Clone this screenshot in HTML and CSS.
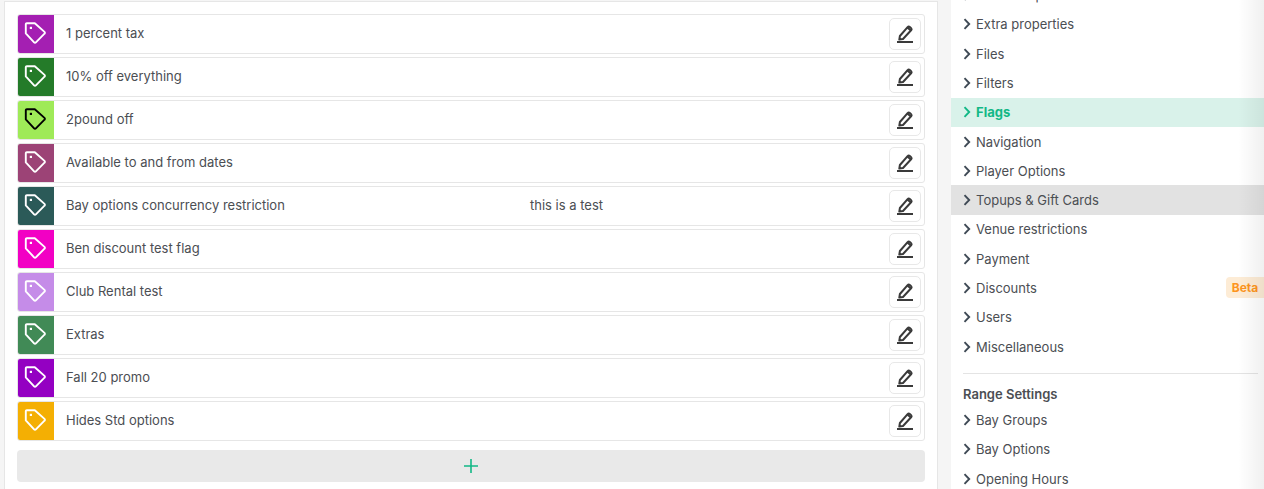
FILE: index.html
```html
<!DOCTYPE html>
<html lang="en">
<head>
<meta charset="utf-8">
<title>Flags</title>
<link rel="stylesheet" href="styles.css">
</head>
<body>
<svg class="sprites" width="0" height="0" aria-hidden="true">
  <symbol id="tag" viewBox="0 0 24 24">
    <path d="M1.8 3.2a1 1 0 0 1 1-1h8l9.7 8.7a1.2 1.2 0 0 1 0 1.8l-8.6 8.6a1.2 1.2 0 0 1-1.8 0L1.8 12.4z" fill="none" stroke="currentColor" stroke-width="1.9" stroke-linejoin="round"/>
    <rect x="5.8" y="5.8" width="2.2" height="2.2" fill="currentColor"/>
  </symbol>
  <symbol id="pen" viewBox="0 0 16 18">
    <path d="M2.3 14.6l.6-3.6 7.7-8.8a1.6 1.6 0 0 1 2.2-.1l1.2 1a1.6 1.6 0 0 1 .1 2.2L6 14z" fill="none" stroke="currentColor" stroke-width="2" stroke-linejoin="round"/>
    <path d="M9.6 3.2l4 3.4 1.2-1.6-3.6-3.2z" fill="currentColor"/>
    <path d="M0 17h17" stroke="currentColor" stroke-width="2" fill="none"/>
  </symbol>
  <symbol id="chev" viewBox="0 0 8 12">
    <path d="M1.5 1.2 6.2 6l-4.7 4.8" fill="none" stroke="currentColor" stroke-width="1.9"/>
  </symbol>
</svg>

<main class="panel">
  <ul class="flags">
    <li class="flag"><span class="swatch c1"><svg class="tag"><use href="#tag"/></svg></span><span class="name">1 percent tax</span><span class="note"></span><button class="edit"><svg class="pen"><use href="#pen"/></svg></button></li>
    <li class="flag"><span class="swatch c2"><svg class="tag"><use href="#tag"/></svg></span><span class="name">10% off everything</span><span class="note"></span><button class="edit"><svg class="pen"><use href="#pen"/></svg></button></li>
    <li class="flag"><span class="swatch c3"><svg class="tag"><use href="#tag"/></svg></span><span class="name">2pound off</span><span class="note"></span><button class="edit"><svg class="pen"><use href="#pen"/></svg></button></li>
    <li class="flag"><span class="swatch c4"><svg class="tag"><use href="#tag"/></svg></span><span class="name">Available to and from dates</span><span class="note"></span><button class="edit"><svg class="pen"><use href="#pen"/></svg></button></li>
    <li class="flag"><span class="swatch c5"><svg class="tag"><use href="#tag"/></svg></span><span class="name">Bay options concurrency restriction</span><span class="note">this is a test</span><button class="edit"><svg class="pen"><use href="#pen"/></svg></button></li>
    <li class="flag"><span class="swatch c6"><svg class="tag"><use href="#tag"/></svg></span><span class="name">Ben discount test flag</span><span class="note"></span><button class="edit"><svg class="pen"><use href="#pen"/></svg></button></li>
    <li class="flag"><span class="swatch c7"><svg class="tag"><use href="#tag"/></svg></span><span class="name">Club Rental test</span><span class="note"></span><button class="edit"><svg class="pen"><use href="#pen"/></svg></button></li>
    <li class="flag"><span class="swatch c8"><svg class="tag"><use href="#tag"/></svg></span><span class="name">Extras</span><span class="note"></span><button class="edit"><svg class="pen"><use href="#pen"/></svg></button></li>
    <li class="flag"><span class="swatch c9"><svg class="tag"><use href="#tag"/></svg></span><span class="name">Fall 20 promo</span><span class="note"></span><button class="edit"><svg class="pen"><use href="#pen"/></svg></button></li>
    <li class="flag"><span class="swatch c10"><svg class="tag"><use href="#tag"/></svg></span><span class="name">Hides Std options</span><span class="note"></span><button class="edit"><svg class="pen"><use href="#pen"/></svg></button></li>
  </ul>
  <button class="add"><svg class="plus" viewBox="0 0 14 14"><path d="M7 0v14M0 7h14" stroke="currentColor" stroke-width="1.6" fill="none"/></svg></button>
</main>

<aside class="side">
  <ul class="menu">
    <li class="item"><svg class="chev"><use href="#chev"/></svg>Email templates</li>
    <li class="item"><svg class="chev"><use href="#chev"/></svg>Extra properties</li>
    <li class="item"><svg class="chev"><use href="#chev"/></svg>Files</li>
    <li class="item"><svg class="chev"><use href="#chev"/></svg>Filters</li>
    <li class="item active"><svg class="chev"><use href="#chev"/></svg>Flags</li>
    <li class="item"><svg class="chev"><use href="#chev"/></svg>Navigation</li>
    <li class="item"><svg class="chev"><use href="#chev"/></svg>Player Options</li>
    <li class="item hover"><svg class="chev"><use href="#chev"/></svg>Topups &amp; Gift Cards</li>
    <li class="item"><svg class="chev"><use href="#chev"/></svg>Venue restrictions</li>
    <li class="item"><svg class="chev"><use href="#chev"/></svg>Payment</li>
    <li class="item"><svg class="chev"><use href="#chev"/></svg>Discounts<span class="beta">Beta</span></li>
    <li class="item"><svg class="chev"><use href="#chev"/></svg>Users</li>
    <li class="item"><svg class="chev"><use href="#chev"/></svg>Miscellaneous</li>
  </ul>
  <hr class="rule">
  <h3 class="heading">Range Settings</h3>
  <ul class="menu">
    <li class="item"><svg class="chev"><use href="#chev"/></svg>Bay Groups</li>
    <li class="item"><svg class="chev"><use href="#chev"/></svg>Bay Options</li>
    <li class="item"><svg class="chev"><use href="#chev"/></svg>Opening Hours</li>
  </ul>
  <div class="fade"></div>
</aside>
</body>
</html>
```
FILE: styles.css
```css
* { box-sizing: border-box; }
html, body { margin: 0; height: 489px; overflow: hidden; }
body {
  display: flex;
  background: #f5f5f5;
  font-family: Inter, "Liberation Sans", sans-serif;
  font-size: 13px;
  color: #4b4e53;
}
.sprites { position: absolute; }
.panel {
  width: 934px;
  height: 488px;
  margin: 1px 0 0 4px;
  padding: 12px 12px 0;
  background: #fff;
  border: 1px solid #e6e6e6;
  border-width: 1px 1px 0 1px;
  flex: none;
}
.flags { list-style: none; margin: 0; padding: 0; display: flex; flex-direction: column; gap: 3px; }
.flag {
  display: flex;
  align-items: center;
  height: 40px;
  border: 1px solid #e6e6e6;
  border-radius: 3px;
  background: #fff;
}
.swatch {
  width: 36px;
  height: 38px;
  display: flex;
  padding: 6px 0 0 6px;
  color: #fff;
  border-radius: 2px 0 0 2px;
  flex: none;
}
.tag { width: 24px; height: 24px; }
.c1 { background: #a41fb2; }
.c2 { background: #247b29; }
.c3 { background: #9fea58; color: #000; }
.c4 { background: #9c4376; }
.c5 { background: #2b5a58; }
.c6 { background: #f200c4; }
.c7 { background: #c58ce8; }
.c8 { background: #418a56; }
.c9 { background: #9400c2; }
.c10 { background: #f4af03; }
.name { width: 464px; margin-left: 12px; padding-bottom: 2px; flex: none; }
.note { flex: 1; padding-bottom: 2px; }
.edit {
  width: 32px;
  height: 32px;
  margin-right: 3px;
  padding: 0;
  display: flex;
  align-items: center;
  justify-content: center;
  background: #fff;
  border: 1px solid #e8e8e8;
  border-radius: 5px;
  color: #3a3a3a;
}
.pen { width: 16px; height: 18px; overflow: visible; }
.add {
  display: flex;
  align-items: center;
  justify-content: center;
  width: 908px;
  height: 32px;
  margin-top: 9px;
  padding: 0;
  background: #e9e9e9;
  border: 0;
  border-radius: 4px;
  color: #12b886;
}
.plus { width: 14px; height: 14px; }
.side {
  position: relative;
  width: 313px;
  height: 489px;
  margin-left: 13px;
  background: #fff;
  flex: none;
  overflow: hidden;
}
.menu { list-style: none; margin: 0; padding: 0; }
.side > .menu:first-child { margin-top: -19.6px; }
.item {
  position: relative;
  display: flex;
  align-items: center;
  height: 29.3px;
  padding-left: 12px;
}
.chev { width: 8px; height: 12px; margin-right: 5px; color: #3f4a55; flex: none; }
.active { background: #d9f2ea; color: #12b886; font-weight: 700; }
.active .chev { color: #12b886; }
.hover { background: #e2e2e2; }
.beta {
  position: absolute;
  right: 0;
  top: 4px;
  width: 38px;
  height: 21px;
  display: flex;
  align-items: center;
  justify-content: center;
  background: #fdecd6;
  color: #fd9520;
  border-radius: 4px 0 0 4px;
  font-size: 12px;
  font-weight: 700;
}
.rule { margin: 12px 0 0 12px; width: 295px; height: 1px; border: 0; background: #e4e4e4; }
.heading { margin: 12px 0 0 12px; font-size: 13px; line-height: 16px; font-weight: 600; color: #4b4e53; }
.heading + .menu { margin-top: 3px; }
.fade {
  position: absolute;
  top: 0;
  right: 0;
  width: 26px;
  height: 100%;
  background: linear-gradient(to right, rgba(0,0,0,0), rgba(0,0,0,0.06));
  pointer-events: none;
}
```
